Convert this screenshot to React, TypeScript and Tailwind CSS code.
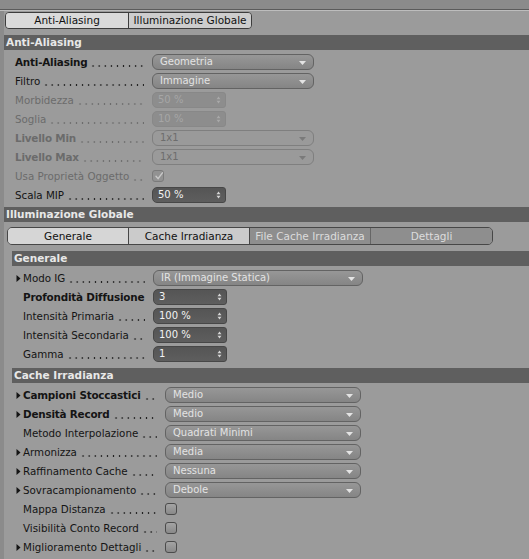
import type { ReactNode } from 'react';
import clsx from 'clsx';

function RightTriangle() {
  return (
    <svg width="5" height="7" viewBox="0 0 5 7" className="block">
      <polygon points="0.5,0 4.5,3.5 0.5,7" fill="#141414" />
    </svg>
  );
}

function DownArrow({ disabled }: { disabled?: boolean }) {
  return (
    <svg width="7" height="4" viewBox="0 0 7 4" className="absolute right-[7px] top-[6px]">
      <polygon points="0,0 7,0 3.5,4" fill={disabled ? '#7a7a7a' : '#e4e4e4'} />
    </svg>
  );
}

function Spinner({ disabled }: { disabled?: boolean }) {
  const fill = disabled ? '#a9a9a9' : '#d6d6d6';
  return (
    <svg width="5" height="8" viewBox="0 0 5 8" className="absolute right-[4px] top-[3.5px]">
      <polygon points="0.5,3.2 2.5,0.4 4.5,3.2" fill={fill} />
      <polygon points="0.5,4.8 2.5,7.6 4.5,4.8" fill={fill} />
    </svg>
  );
}

function Dropdown({ value, widthClass, disabled }: { value: string; widthClass: string; disabled?: boolean }) {
  return (
    <div
      className={clsx(
        'relative flex h-[16px] shrink-0 items-center rounded-[6px] border pl-[7px] text-[10px] leading-none',
        widthClass,
        disabled
          ? 'border-[#7f7f7f] bg-[#9a9a9a] text-[#6d6d6d]'
          : 'border-[#636363] bg-gradient-to-b from-[#979797] to-[#858585] text-[#e3e3e3]'
      )}
    >
      <span className="whitespace-nowrap">{value}</span>
      <DownArrow disabled={disabled} />
    </div>
  );
}

function NumberField({ value, disabled }: { value: string; disabled?: boolean }) {
  return (
    <div
      className={clsx(
        'relative flex h-[16px] w-[74px] shrink-0 items-center rounded-l-[5px] rounded-r-[3px] border pl-[5px] text-[10px] leading-none',
        disabled
          ? 'border-[#888888] bg-[#8d8d8d] text-[#a6a6a6]'
          : 'border-[#474747] bg-gradient-to-b from-[#555555] to-[#5e5e5e] text-[#f3f3f3]'
      )}
    >
      <span className="whitespace-nowrap">{value}</span>
      <Spinner disabled={disabled} />
    </div>
  );
}

function Checkbox({ checked, disabled }: { checked?: boolean; disabled?: boolean }) {
  return (
    <div
      className={clsx(
        'relative h-[12px] w-[12px] shrink-0 rounded-[3px] border',
        disabled
          ? 'border-[#7b7b7b] bg-[#929292]'
          : 'border-[#4b4b4b] bg-gradient-to-b from-[#a4a4a4] to-[#898989]'
      )}
    >
      {checked && (
        <svg width="10" height="10" viewBox="0 0 10 10" className="absolute left-[0.5px] top-[0.5px]">
          <path d="M2 5.2 L4.1 7.6 L8.4 1.8" stroke="#c9c9c9" strokeWidth="1.4" fill="none" strokeLinecap="round" />
        </svg>
      )}
    </div>
  );
}

interface RowProps {
  label: string;
  labelClass: string;
  bold?: boolean;
  disabled?: boolean;
  arrow?: boolean;
  gutter?: boolean;
  children: ReactNode;
}

function Row({ label, labelClass, bold, disabled, arrow, gutter, children }: RowProps) {
  return (
    <div className="flex h-[19px] items-center">
      <div className={clsx('flex shrink-0 translate-y-[1px] items-center pr-[8px]', labelClass)}>
        {gutter && <span className="flex w-[7px] shrink-0 items-center">{arrow && <RightTriangle />}</span>}
        <span
          className={clsx(
            'whitespace-nowrap leading-none',
            bold ? 'text-[10.4px] font-bold tracking-[-0.2px]' : 'text-[10.3px]',
            disabled ? 'text-[#6b6b6b]' : 'text-[#141414]'
          )}
        >
          {label}
        </span>
        {/* dot leader */}
        <span
          className={clsx(
            'ml-[3px] mt-[7px] h-[2px] min-w-0 flex-1 bg-[length:6.1px_2px] bg-repeat-x',
            disabled
              ? 'bg-[radial-gradient(circle,#6b6b6b_0.7px,transparent_1.05px)]'
              : 'bg-[radial-gradient(circle,#1e1e1e_0.7px,transparent_1.05px)]'
          )}
        />
      </div>
      {children}
    </div>
  );
}

function SectionHeader({ title }: { title: string }) {
  return (
    <div className="flex h-[15px] shrink-0 items-center bg-[#5f5f5f] pl-[2px] text-[10.5px] font-bold leading-none text-[#e8e8e8]">
      {title}
    </div>
  );
}

const AA_LABEL = 'w-[137px]';
const GEN_LABEL = 'w-[137px]';
const CACHE_LABEL = 'w-[149px]';

export default function App() {
  return (
    <div className="h-[559px] w-[529px] overflow-hidden bg-[#8b8b8b] font-['DejaVu_Sans',sans-serif]">
      <div className="h-[9px]" />
      <div className="h-px bg-[#5b5b5b]" />
      <div className="h-px bg-[#bdbdbd]" />
      <div className="ml-[4px] flex h-[548px] flex-col bg-[#9b9b9b]">
        {/* top tabs */}
        <div className="ml-[1px] mt-[1px] flex h-[17px] w-[247px] overflow-hidden rounded-[4px] border border-[#3d3d3d] text-[10.5px] leading-none text-[#111111]">
          <div className="flex w-[123px] items-center justify-center border-r border-[#3d3d3d] bg-[#dadada]">Anti-Aliasing</div>
          <div className="flex flex-1 items-center justify-center whitespace-nowrap bg-[#cdcdcd]">Illuminazione Globale</div>
        </div>

        <div className="mt-[6px]">
          <SectionHeader title="Anti-Aliasing" />
        </div>
        <div className="mt-[2px] pl-[11px]">
          <Row label="Anti-Aliasing" labelClass={AA_LABEL} bold>
            <Dropdown value="Geometria" widthClass="w-[162px]" />
          </Row>
          <Row label="Filtro" labelClass={AA_LABEL}>
            <Dropdown value="Immagine" widthClass="w-[162px]" />
          </Row>
          <Row label="Morbidezza" labelClass={AA_LABEL} disabled>
            <NumberField value="50 %" disabled />
          </Row>
          <Row label="Soglia" labelClass={AA_LABEL} disabled>
            <NumberField value="10 %" disabled />
          </Row>
          <Row label="Livello Min" labelClass={AA_LABEL} bold disabled>
            <Dropdown value="1x1" widthClass="w-[162px]" disabled />
          </Row>
          <Row label="Livello Max" labelClass={AA_LABEL} bold disabled>
            <Dropdown value="1x1" widthClass="w-[162px]" disabled />
          </Row>
          <Row label="Usa Proprietà Oggetto" labelClass={AA_LABEL} disabled>
            <Checkbox checked disabled />
          </Row>
          <Row label="Scala MIP" labelClass={AA_LABEL}>
            <NumberField value="50 %" />
          </Row>
        </div>

        <div className="mt-[3px]">
          <SectionHeader title="Illuminazione Globale" />
        </div>

        {/* sub tabs */}
        <div className="ml-[3px] mt-[5px] flex h-[18px] w-[486px] overflow-hidden rounded-[5px] border border-[#474747] text-[10.5px] leading-none">
          <div className="flex w-[121px] items-center justify-center border-r border-[#474747] bg-[#d6d6d6] text-[#111111]">Generale</div>
          <div className="flex w-[121px] items-center justify-center whitespace-nowrap border-r border-[#474747] bg-[#cbcbcb] text-[#111111]">Cache Irradianza</div>
          <div className="flex w-[121px] items-center justify-center whitespace-nowrap border-r border-[#666666] bg-[#8e8e8e] text-[#dcdcdc]">File Cache Irradianza</div>
          <div className="flex flex-1 items-center justify-center bg-[#8e8e8e] text-[#dcdcdc]">Dettagli</div>
        </div>

        <div className="ml-[8px] flex flex-col">
          <div className="mt-[6px]">
            <SectionHeader title="Generale" />
          </div>
          <div className="mt-[2px] pl-[4px]">
            <Row label="Modo IG" labelClass={GEN_LABEL} gutter arrow>
              <Dropdown value="IR (Immagine Statica)" widthClass="w-[210px]" />
            </Row>
            <Row label="Profondità Diffusione" labelClass={GEN_LABEL} gutter bold>
              <NumberField value="3" />
            </Row>
            <Row label="Intensità Primaria" labelClass={GEN_LABEL} gutter>
              <NumberField value="100 %" />
            </Row>
            <Row label="Intensità Secondaria" labelClass={GEN_LABEL} gutter>
              <NumberField value="100 %" />
            </Row>
            <Row label="Gamma" labelClass={GEN_LABEL} gutter>
              <NumberField value="1" />
            </Row>
          </div>

          <div className="mt-[5px]">
            <SectionHeader title="Cache Irradianza" />
          </div>
          <div className="mt-[2px] pl-[4px]">
            <Row label="Campioni Stoccastici" labelClass={CACHE_LABEL} gutter arrow bold>
              <Dropdown value="Medio" widthClass="w-[196px]" />
            </Row>
            <Row label="Densità Record" labelClass={CACHE_LABEL} gutter arrow bold>
              <Dropdown value="Medio" widthClass="w-[196px]" />
            </Row>
            <Row label="Metodo Interpolazione" labelClass={CACHE_LABEL} gutter>
              <Dropdown value="Quadrati Minimi" widthClass="w-[196px]" />
            </Row>
            <Row label="Armonizza" labelClass={CACHE_LABEL} gutter arrow>
              <Dropdown value="Media" widthClass="w-[196px]" />
            </Row>
            <Row label="Raffinamento Cache" labelClass={CACHE_LABEL} gutter arrow>
              <Dropdown value="Nessuna" widthClass="w-[196px]" />
            </Row>
            <Row label="Sovracampionamento" labelClass={CACHE_LABEL} gutter arrow>
              <Dropdown value="Debole" widthClass="w-[196px]" />
            </Row>
            <Row label="Mappa Distanza" labelClass={CACHE_LABEL} gutter>
              <Checkbox />
            </Row>
            <Row label="Visibilità Conto Record" labelClass={CACHE_LABEL} gutter>
              <Checkbox />
            </Row>
            <Row label="Miglioramento Dettagli" labelClass={CACHE_LABEL} gutter arrow>
              <Checkbox />
            </Row>
          </div>
        </div>
      </div>
    </div>
  );
}
